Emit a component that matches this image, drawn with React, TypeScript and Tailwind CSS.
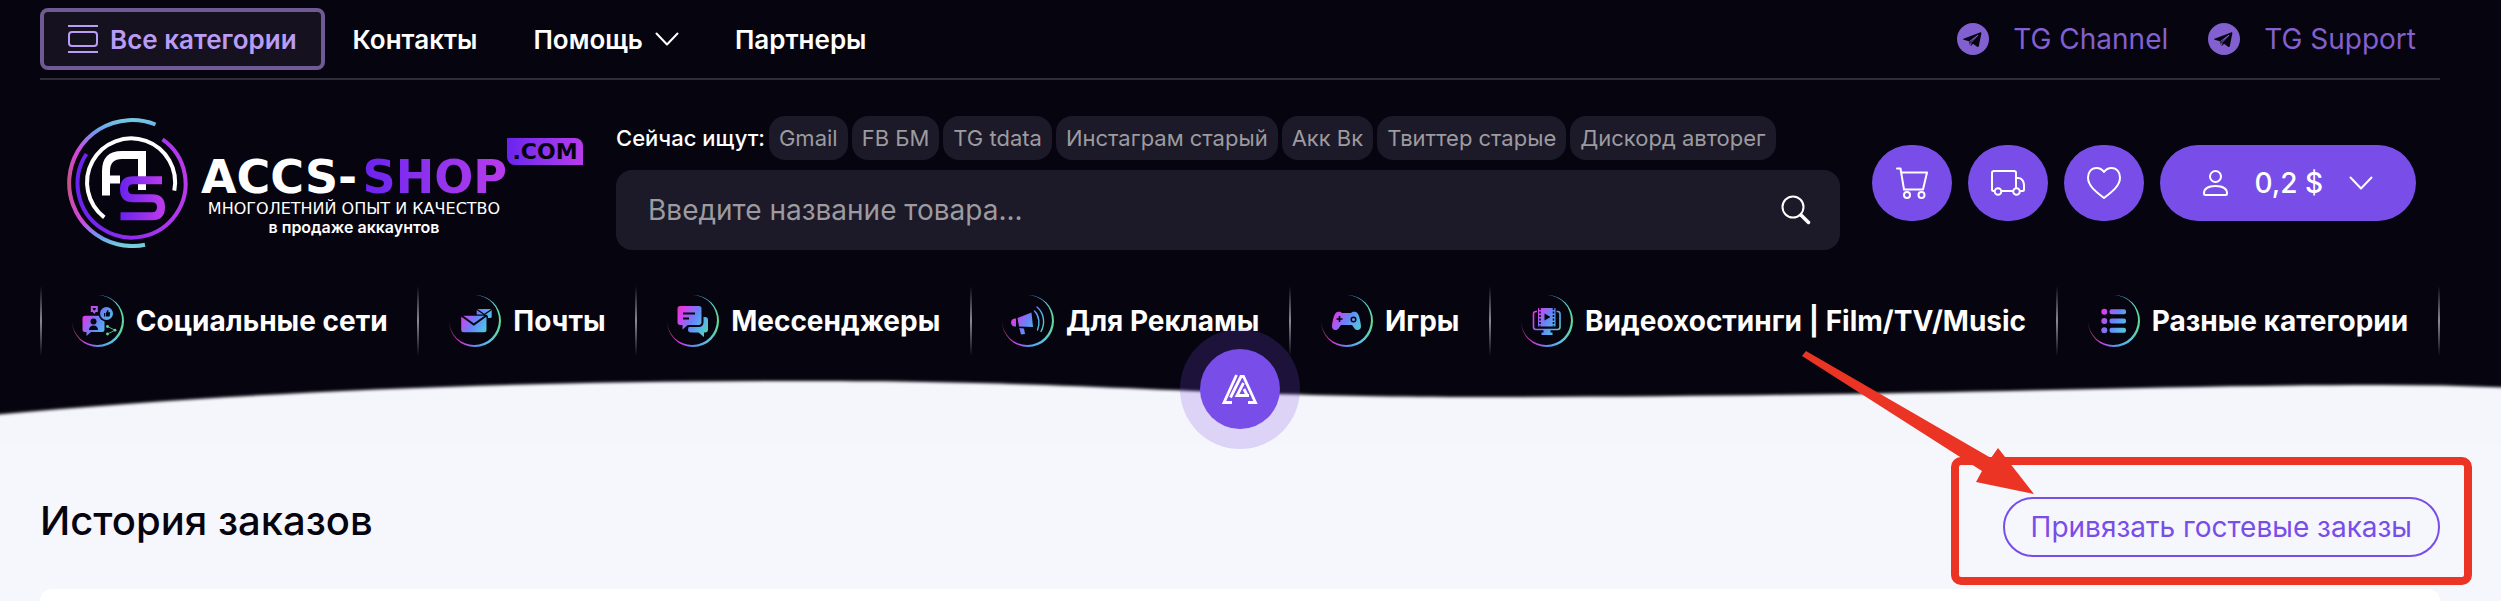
import type { ReactNode } from "react";

const tags = ["Gmail", "FB БМ", "TG tdata", "Инстаграм старый", "Акк Вк", "Твиттер старые", "Дискорд авторег"];

const neon = "url(#neon)";
const dark = "#06040f";

const categories: { name: string; icon: ReactNode }[] = [
  {
    name: "Социальные сети",
    icon: (
      <>
        <path fill={neon} d="M13 20.7H30a2.5 2.5 0 0 1 2.5 2.5V34.5a2.5 2.5 0 0 1-2.5 2.5H19l-4.5 4V37H13a2.5 2.5 0 0 1-2.5-2.5V23.2a2.5 2.5 0 0 1 2.5-2.5Z" />
        <circle cx="34.5" cy="18.5" r="8" fill={dark} />
        <circle cx="34.5" cy="18.5" r="6.5" fill={neon} />
        <path fill={dark} d="M32 18h1.3v3.5H32zM34 18l1.5-3 1 .5-.3 1.7h2l-.6 4.3H34z" />
        <circle cx="21.5" cy="26.5" r="3" fill={dark} />
        <path fill={dark} d="M17 35c0-3 2-4.5 4.5-4.5S26 32 26 35Z" />
        <path fill={neon} d="M18.8 11h7v6h-2l-1.5 2-1.5-2h-2z" />
        <path fill={dark} d="M20.8 13h3v1l-1.5 1.8-1.5-1.8z" />
        <path d="M35.5 31.5 43 35.2 35.5 39" fill="none" stroke="#5fd89a" strokeWidth="0.8" />
        <g fill="#5fd89a">
          <circle cx="35.5" cy="31.5" r="1.4" />
          <circle cx="43" cy="35.2" r="1.4" />
          <circle cx="35.5" cy="39" r="1.4" />
        </g>
      </>
    ),
  },
  {
    name: "Почты",
    icon: (
      <>
        <rect x="27.7" y="14" width="15" height="9" rx="1.5" fill={neon} />
        <path d="m28 14.5 7.3 5 7.3-5" fill="none" stroke={dark} strokeWidth="1.3" />
        <rect x="11" y="19.5" width="28" height="19" rx="3" fill={dark} />
        <rect x="12.2" y="20.7" width="25.3" height="16.6" rx="2.5" fill={neon} />
        <path d="m13 21 11.8 8.5L36.8 21" fill="none" stroke={dark} strokeWidth="2" />
      </>
    ),
  },
  {
    name: "Мессенджеры",
    icon: (
      <>
        <path fill={neon} d="M24 22h14a3 3 0 0 1 3 3v9.5a3 3 0 0 1-3 3h-1v4.5l-5.5-4.5H24a3 3 0 0 1-3-3Z" />
        <path fill={neon} stroke={dark} strokeWidth="2" d="M13 10h19a3.5 3.5 0 0 1 3.5 3.5v14A3.5 3.5 0 0 1 32 31H21l-6.5 6V31H13a3.5 3.5 0 0 1-3.5-3.5v-14A3.5 3.5 0 0 1 13 10Z" />
        <path d="M16 18.5h12M16 23.5h6" stroke={dark} strokeWidth="2" />
      </>
    ),
  },
  {
    name: "Для Рекламы",
    icon: (
      <>
        <path fill={neon} d="m15.5 23 14-5.5 1.5 14.5-14-.5ZM17.3 33l4.7.5 1 5.5-4 .5ZM14 23.5v8c-3 .5-5-1.5-5-4s2-4.2 5-4Z" />
        <g fill="none" stroke={neon} strokeWidth="1.4" strokeLinecap="round">
          <path d="M32.5 16c5 5 5.5 13 3 19" />
          <path d="M35 12c7 6 8.5 16 4 24.5" />
        </g>
      </>
    ),
  },
  {
    name: "Игры",
    icon: (
      <>
        <path fill={neon} d="M16 17c2-.5 4-.3 5 1h9c1-1.3 3-1.5 5-1 3 1 4.5 9 5 14 .3 4-4 5.500-6.500 2.500L31 30H20l-2.500 3.500C15 36.500 10.700 35 11 31c.5-5 2-13 5-14Z" />
        <path d="M15.5 24h6M18.5 21v6" stroke={dark} strokeWidth="1.6" />
        <circle cx="32.5" cy="24.5" r="2.3" fill="none" stroke={dark} strokeWidth="1.5" />
      </>
    ),
  },
  {
    name: "Видеохостинги | Film/TV/Music",
    icon: (
      <>
        <path d="M16 16.5h-1a2.5 2.5 0 0 0-2.5 2.5v13a2.5 2.5 0 0 0 2.5 2.5h21.5A2.5 2.5 0 0 0 39 32V19a2.5 2.5 0 0 0-2.5-2.5h-1" fill="none" stroke={neon} strokeWidth="1.6" />
        <path fill={neon} d="M17 13h17.5v18.5H17zM22.5 34h7v3.5h2v2.5h-11v-2.5h2z" />
        <path d="M19 13v18.5M32.5 13v18.5" stroke={dark} strokeWidth="1.6" strokeDasharray="2 1.5" />
        <path fill={dark} d="m23.5 18.5 6 3.5-6 3.5z" />
      </>
    ),
  },
  {
    name: "Разные категории",
    icon: (
      <g fill={neon}>
        <circle cx="16.3" cy="16.7" r="3" />
        <circle cx="16.3" cy="26" r="3" />
        <circle cx="16.3" cy="35.3" r="3" />
        <rect x="21.5" y="14.2" width="16.5" height="5" rx="2" />
        <rect x="21.5" y="23.5" width="16.5" height="5" rx="2" />
        <rect x="21.5" y="32.8" width="16.5" height="5" rx="2" />
      </g>
    ),
  },
];

function Chevron() {
  return (
    <svg width="24" height="24" viewBox="0 0 24 24" fill="none" stroke="currentColor" strokeWidth="2" strokeLinecap="round" strokeLinejoin="round" aria-hidden="true">
      <path d="m1.5 6.5 10.5 11 10.5-11" />
    </svg>
  );
}

function Telegram() {
  return (
    <svg width="32" height="32" viewBox="0 0 32 32" aria-hidden="true">
      <circle cx="16" cy="16" r="16" fill="#8260cf" />
      <path fill={dark} d="M6.5 15.8 23 9.4c.8-.3 1.5.2 1.3 1.3l-2.5 12.4c-.2 1-.9 1.2-1.7.7l-4-3-2 2c-.4.4-.9.4-1-.2l-1.2-4.3-5.2-1.5c-.8-.3-.8-.8-.2-1Z" />
      <path d="m12.5 18.5 8.5-6.3-7 7.3-.5 3" fill="none" stroke="#8260cf" strokeWidth="1" />
    </svg>
  );
}

function Emblem() {
  return (
    <svg width="130" height="130" viewBox="0 0 130 130" fill="none" aria-hidden="true" className="shrink-0">
      <defs>
        <linearGradient id="ring" x1="0" y1="0" x2="0" y2="1">
          <stop offset="0" stopColor="#74c8e0" />
          <stop offset="0.08" stopColor="#6f9df0" />
          <stop offset="0.25" stopColor="#d545e0" />
          <stop offset="0.5" stopColor="#c2577f" />
          <stop offset="0.8" stopColor="#d545e0" />
          <stop offset="0.93" stopColor="#6f9df0" />
          <stop offset="1" stopColor="#74d0d8" />
        </linearGradient>
        <linearGradient id="violet" x1="0" y1="0" x2="1" y2="0">
          <stop offset="0" stopColor="#6a22ee" />
          <stop offset="1" stopColor="#b93aec" />
        </linearGradient>
      </defs>
      <path d="M88.5 6.5A63 63 0 1 0 78 126.7" stroke="url(#ring)" strokeWidth="4" />
      <path d="M95.5 21.3A54 54 0 1 1 19.4 36" stroke="url(#violet)" strokeWidth="4" />
      <path d="M107.3 72.7A44 44 0 1 0 37.3 99.3" stroke="#fff" strokeWidth="4" />
      <path d="M39 77.5V53q0-16 16-16h20v35M39 61.5h14" stroke="#fff" strokeWidth="8" />
      <path d="M95 62.3H66q-9 0-9 9t9 9h19q9 0 9 9t-9 9H53.5" stroke="url(#violet)" strokeWidth="8" />
    </svg>
  );
}

export default function App() {
  return (
    <div className="flex min-h-screen flex-col overflow-x-hidden bg-[#f6f6fd] font-[Inter,sans-serif] text-[#06040f]">
      <header className="relative bg-[#06040f] text-white">
        <svg width="0" height="0" className="absolute" aria-hidden="true">
          <defs>
            <linearGradient id="neon" gradientUnits="userSpaceOnUse" x1="6" y1="14" x2="46" y2="36">
              <stop offset="0" stopColor="#c0507a" />
              <stop offset="0.18" stopColor="#e636ea" />
              <stop offset="0.5" stopColor="#6684f7" />
              <stop offset="0.72" stopColor="#55b4ee" />
              <stop offset="1" stopColor="#5fdc90" />
            </linearGradient>
            <linearGradient id="crescent" gradientUnits="userSpaceOnUse" x1="0" y1="26" x2="52" y2="26">
              <stop offset="0" stopColor="#8a3a5a" />
              <stop offset="0.25" stopColor="#d838e0" />
              <stop offset="0.5" stopColor="#5a90f0" />
              <stop offset="0.8" stopColor="#58c4dc" />
              <stop offset="1" stopColor="#5fdc90" />
            </linearGradient>
          </defs>
        </svg>

        <div className="pr-[61px] pl-10">
          {/* Top bar */}
          <div className="flex items-center border-b-2 border-[#2f2c3a] py-2">
            <button className="flex h-[62px] items-center gap-3 rounded-lg border-4 border-[#6f5a94] bg-[#16111f] px-6 text-[26px] font-semibold text-[#b99cf5]">
              <svg width="30" height="30" viewBox="0 0 30 30" fill="none" stroke="currentColor" strokeWidth="2" aria-hidden="true">
                <path d="M0 2h30M0 28h30" />
                <rect x="1" y="8" width="28" height="14" rx="3" />
              </svg>
              Все категории
            </button>
            <nav className="flex items-center text-[26px] font-semibold">
              <a href="#contacts" className="px-7">Контакты</a>
              <a href="#help" className="flex items-center gap-3 px-7">
                Помощь
                <Chevron />
              </a>
              <a href="#partners" className="px-7">Партнеры</a>
            </nav>
            <div className="ml-auto flex items-center gap-10 pr-6 text-[28px] text-[#8260cf]">
              <a href="#channel" className="flex items-center gap-6">
                <Telegram />
                TG Channel
              </a>
              <a href="#support" className="flex items-center gap-6">
                <Telegram />
                TG Support
              </a>
            </div>
          </div>

          {/* Logo, search and account */}
          <div className="flex items-center gap-8 pt-9 pr-6 pl-[27px]">
            <a href="#home" className="flex w-[517px] shrink-0 items-center gap-1">
              <Emblem />
              <div className="relative w-[306px] pt-[27px]">
                <div className="flex items-center justify-between font-['DejaVu_Sans',sans-serif] text-[46px] leading-10 font-bold">
                  <span>ACCS-</span>
                  <span className="bg-linear-to-r from-[#6a22ee] to-[#b93aec] bg-clip-text text-transparent">SHOP</span>
                </div>
                <span className="absolute top-2 left-full flex h-[27px] w-19 items-center justify-center rounded-tr-lg rounded-bl-lg bg-linear-to-r from-[#6a22ee] to-[#b93aec] font-['DejaVu_Sans',sans-serif] text-[22px] font-bold text-[#06040f]">
                  .COM
                </span>
                <p className="mt-1 text-center font-['DejaVu_Sans',sans-serif] text-[16px] leading-4 whitespace-nowrap">МНОГОЛЕТНИЙ ОПЫТ И КАЧЕСТВО</p>
                <p className="text-center text-[16px] leading-5 font-semibold">в продаже аккаунтов</p>
              </div>
            </a>

            <div className="min-w-0 flex-1">
              <div className="flex items-center gap-1 text-[22px]">
                <span className="font-medium">Сейчас ищут:</span>
                {tags.map((tag) => (
                  <a key={tag} href="#search" className="flex h-11 items-center rounded-2xl bg-[#1c1929] px-[10px] whitespace-nowrap text-[#9c9b9f]">
                    {tag}
                  </a>
                ))}
              </div>
              <div className="mt-[10px] flex h-20 items-center rounded-2xl bg-[#1c1929] pr-[29px] pl-8">
                <input
                  type="text"
                  aria-label="Поиск товара"
                  placeholder="Введите название товара..."
                  className="min-w-0 flex-1 bg-transparent text-[28px] outline-none placeholder:text-[#9c9b9f]"
                />
                <button aria-label="Найти">
                  <svg width="30" height="30" viewBox="0 0 30 30" fill="none" stroke="#fff" strokeLinecap="round" aria-hidden="true">
                    <circle cx="12" cy="12" r="10.5" strokeWidth="2" />
                    <path d="m20 20 7.5 7.5" strokeWidth="3.5" />
                  </svg>
                </button>
              </div>
            </div>

            <div className="flex items-center gap-4">
              <button aria-label="Корзина" className="flex h-[76px] w-20 items-center justify-center rounded-full bg-[#784de8]">
                <svg width="32" height="32" viewBox="0 0 32 32" fill="none" stroke="#fff" strokeWidth="2" strokeLinecap="round" strokeLinejoin="round" aria-hidden="true">
                  <path d="M1 1.5h3.5L8 22.5h19L31 5.5H5.5" />
                  <circle cx="11" cy="28" r="3" />
                  <circle cx="25.5" cy="28" r="3" />
                </svg>
              </button>
              <button aria-label="Доставка" className="flex h-[76px] w-20 items-center justify-center rounded-full bg-[#784de8]">
                <svg width="34" height="26" viewBox="0 0 34 26" fill="none" stroke="#fff" strokeWidth="2" strokeLinejoin="round" aria-hidden="true">
                  <path d="M3.5 21H2.5A1.5 1.5 0 0 1 1 19.5V3a2 2 0 0 1 2-2h20a2 2 0 0 1 2 2v15M10 21h12M25 8h2.5C31 8 33 12 33 15v4.5a1.5 1.5 0 0 1-1.5 1.5h-2.5" />
                  <circle cx="7" cy="21.5" r="3.3" />
                  <circle cx="25.5" cy="21.5" r="3.3" />
                </svg>
              </button>
              <button aria-label="Избранное" className="flex h-[76px] w-20 items-center justify-center rounded-full bg-[#784de8]">
                <svg width="34" height="32" viewBox="0 0 34 32" fill="none" stroke="#fff" strokeWidth="2" strokeLinejoin="round" aria-hidden="true">
                  <path d="M17 5C14.5 1.5 11.5 1 9.5 1 4.5 1 1 5 1 10.5 1 19 9 25 17 31c8-6 16-12 16-20.5C33 5 29.5 1 24.5 1c-2 0-5 .5-7.5 4Z" />
                </svg>
              </button>
              <button className="flex h-[76px] items-center gap-[26px] rounded-full bg-[#784de8] px-[43px] text-[28px] font-medium">
                <svg width="25" height="26" viewBox="0 0 25 26" fill="none" stroke="#fff" strokeWidth="2" strokeLinejoin="round" aria-hidden="true">
                  <circle cx="12.5" cy="6.5" r="5.5" />
                  <path d="M1 23.5C1 19 5 16 12.5 16S24 19 24 23.5q0 1.5-1.5 1.5h-20Q1 25 1 23.5Z" />
                </svg>
                <span className="whitespace-nowrap">0,2 $</span>
                <Chevron />
              </button>
            </div>
          </div>

          {/* Categories */}
          <nav className="mt-9 flex h-[70px] items-center justify-between">
            <span className="h-full w-[2px] bg-linear-to-b from-transparent via-[#8a8990] to-transparent" />
            {categories.map((c) => (
              <div key={c.name} className="flex h-full flex-auto items-center">
                <a href="#category" className="flex flex-auto items-center justify-center gap-3 text-[28px] font-bold whitespace-nowrap">
                  <svg width="52" height="52" viewBox="0 0 52 52" aria-hidden="true">
                    <path fill="url(#crescent)" d="M26 0A26 26 0 1 1 0 26A25 25 0 1 0 26 0Z" />
                    {c.icon}
                  </svg>
                  {c.name}
                </a>
                <span className="h-full w-[2px] bg-linear-to-b from-transparent via-[#8a8990] to-transparent" />
              </div>
            ))}
          </nav>
        </div>

        {/* Wavy lower edge */}
        <svg viewBox="0 0 2501 88" preserveAspectRatio="none" className="block h-[88px] w-full" aria-hidden="true">
          <filter id="soft" x="-1%" y="-10%" width="102%" height="120%">
            <feGaussianBlur stdDeviation="1.5" />
          </filter>
          <path
            filter="url(#soft)"
            fill="#f5f6fb"
            d="M-20 60C200 40 450 25 810 25C1100 25 1200 41 1480 41C1900 41 2150 29 2380 29Q2450 29 2520 32V110H-20Z"
          />
          <path d="M0 84h2501v4H0z" fill="#f5f6fb" />
        </svg>

        <div className="absolute inset-x-0 bottom-[-5px] flex justify-center pr-[21px]">
          <button aria-label="Меню" className="flex size-[120px] items-center justify-center rounded-full bg-[#784de8]/20">
            <span className="flex size-20 items-center justify-center rounded-full bg-[#784de8]">
              <svg width="38" height="30" viewBox="0 0 38 30" fill="none" stroke="#fff" strokeWidth="2.8" aria-hidden="true">
                <path d="M15.5 1 3 28.5h8M9.5 23.5 20 2.5h2.5L34.5 28.5h-7.5M22.5 9 16 21.5h12M23 15l3 6" />
              </svg>
            </span>
          </button>
        </div>
      </header>

      <main className="flex flex-1 flex-col pr-[61px] pl-10">
        <div className="flex items-start justify-between pt-[53px]">
          <h1 className="text-[40px] leading-[48px] font-medium">История заказов</h1>
          <div className="relative">
            <button className="h-[60px] rounded-full border-2 border-[#784de8] px-[26px] text-[28px] text-[#784de8]">
              Привязать гостевые заказы
            </button>
            <span className="pointer-events-none absolute -top-10 -right-8 -bottom-7 -left-13 rounded-[10px] border-8 border-[#eb3424]" />
            <svg width="234" height="144" viewBox="0 0 234 144" className="pointer-events-none absolute top-[-147px] left-[-202px]" aria-hidden="true">
              <path fill="#eb3424" d="m5 1 185 107 7-10 36 46-58-12 6-11L1 6Z" />
            </svg>
          </div>
        </div>
        <section className="mt-8 flex-1 rounded-t-[32px] bg-white" />
      </main>
    </div>
  );
}
